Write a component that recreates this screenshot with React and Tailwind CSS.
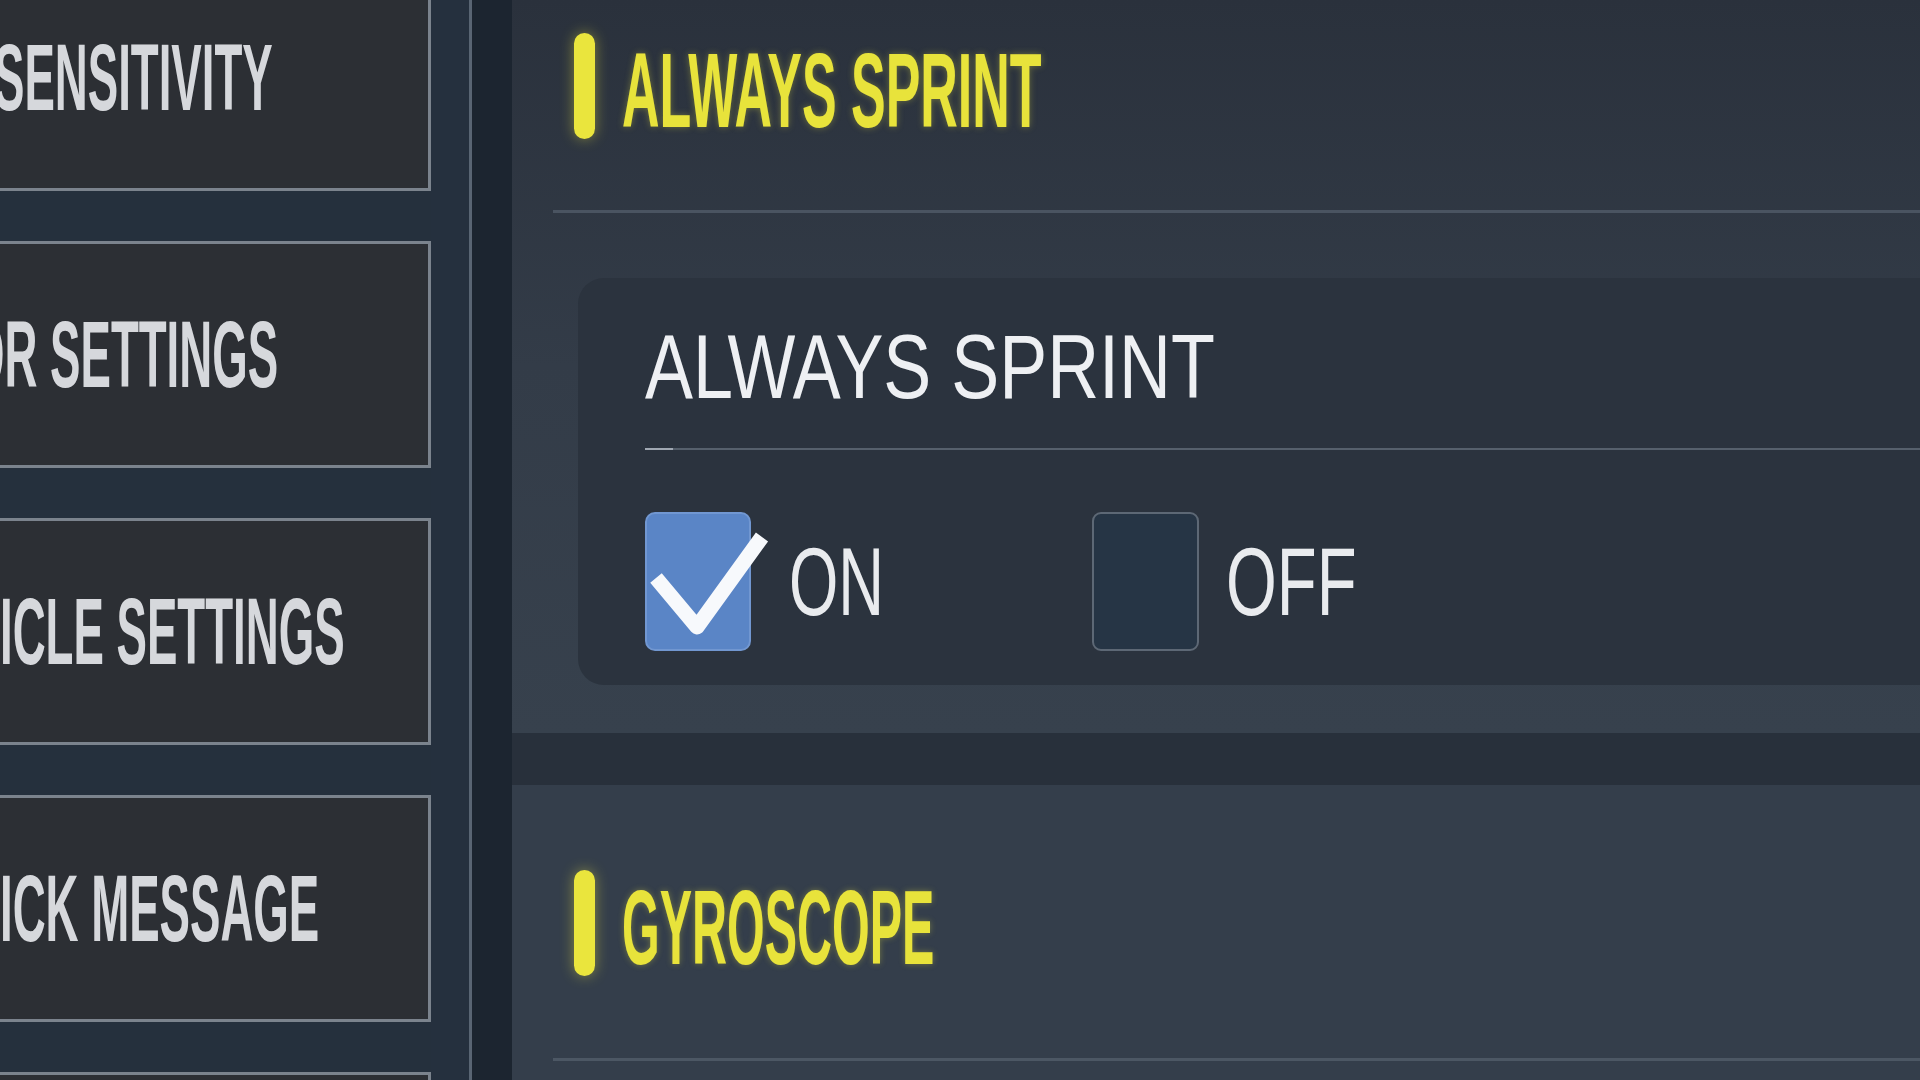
import React from 'react';

const sideItems = [
  { label: 'SENSITIVITY', shift: '-ml-[6px]' },
  { label: 'OR SETTINGS', shift: '-ml-[31px]' },
  { label: 'ICLE SETTINGS', shift: 'ml-0' },
  { label: 'ICK MESSAGE', shift: 'ml-0' },
  { label: '', shift: 'ml-0' },
];

const sans = "font-['Liberation_Sans',Arial,sans-serif]";

function SideButton({ label, shift }) {
  return (
    <div className="h-[227px] w-[431px] shrink-0 flex items-center overflow-hidden bg-[#2c2f34] border-y-[3px] border-r-[3px] border-[#7b838d]">
      <span
        className={`${sans} ${shift} inline-block origin-left scale-x-[0.48] whitespace-nowrap text-[95px] leading-none font-bold text-[#d6d8dc]`}
      >
        {label}
      </span>
    </div>
  );
}

function SectionTitle({ text, scale }) {
  return (
    <div className="flex items-start pl-[62px]">
      <div className="w-[21px] h-[106px] rounded-full bg-[#eae53d] shadow-[0_0_14px_rgba(234,229,61,0.45)]"></div>
      <span
        className={`${sans} ${scale} ml-[27px] mt-[4px] inline-block origin-left whitespace-nowrap text-[106px] leading-none font-bold text-[#e8e33b] [text-shadow:0_0_10px_rgba(232,227,59,0.35)]`}
      >
        {text}
      </span>
    </div>
  );
}

function Option({ label, checked, width }) {
  return (
    <div className={`flex items-center ${width}`}>
      {checked ? (
        <div className="relative w-[106px] h-[139px] rounded-[10px] bg-[#5a85c6] border-2 border-[#7197d1]">
          <svg className="absolute -left-[2px] -top-[2px] overflow-visible" width="106" height="139" viewBox="0 0 106 139">
            <path d="M11 66 L52 115 L117 25" fill="none" stroke="#f7f9fc" strokeWidth="15" strokeLinejoin="round" />
          </svg>
        </div>
      ) : (
        <div className="w-[107px] h-[139px] rounded-[9px] bg-[#263545] border-2 border-[#5d6875]"></div>
      )}
      <span
        className={`${sans} ${checked ? 'ml-[38px] scale-x-[0.66]' : 'ml-[27px] scale-x-[0.68]'} inline-block origin-left whitespace-nowrap text-[96px] leading-none text-[#e9ebee]`}
      >
        {label}
      </span>
    </div>
  );
}

export default function App() {
  return (
    <div className="w-[1920px] h-[1080px] overflow-hidden flex bg-[#1f2833]">
      {/* Left menu */}
      <div className="w-[512px] h-full flex shrink-0">
        <div className="w-[431px] h-full bg-[#25303d] overflow-hidden">
          <div className="flex flex-col gap-[50px] -mt-[36px]">
            {sideItems.map((item, i) => (
              <SideButton key={i} label={item.label} shift={item.shift} />
            ))}
          </div>
        </div>
        <div className="w-[38px] h-full bg-[#25303e]"></div>
        <div className="w-[3px] h-full bg-[#596573]"></div>
        <div className="flex-1 h-full bg-[#1c2530]"></div>
      </div>

      {/* Settings panel */}
      <div className="flex-1 h-full flex flex-col overflow-hidden">
        <div className="h-[733px] shrink-0 pt-[33px] bg-gradient-to-b from-[#2a313c] via-[#333c48] to-[#37414d]">
          <SectionTitle text="ALWAYS SPRINT" scale="scale-x-[0.49]" />
          <div className="ml-[41px] mt-[67px] h-[3px] bg-[#4a5461]"></div>
          <div className="ml-[66px] mt-[65px] h-[407px] rounded-l-[26px] bg-[#2b333e] pt-[43px] pl-[67px]">
            <span
              className={`${sans} inline-block origin-left scale-x-[0.79] whitespace-nowrap text-[91px] leading-none text-[#eef0f3]`}
            >
              ALWAYS SPRINT
            </span>
            <div className="mt-[36px] h-[2px] bg-[#56606c]">
              <div className="w-[28px] h-[2px] bg-[#a0a8b2]"></div>
            </div>
            <div className="mt-[62px] flex">
              <Option label="ON" checked width="w-[447px]" />
              <Option label="OFF" width="" />
            </div>
          </div>
        </div>
        <div className="h-[52px] shrink-0 bg-[#28303b]"></div>
        <div className="flex-1 pt-[85px] bg-[#343e4b]">
          <SectionTitle text="GYROSCOPE" scale="scale-x-[0.457]" />
          <div className="ml-[41px] mt-[78px] h-[3px] bg-[#4c5764]"></div>
        </div>
      </div>
    </div>
  );
}
